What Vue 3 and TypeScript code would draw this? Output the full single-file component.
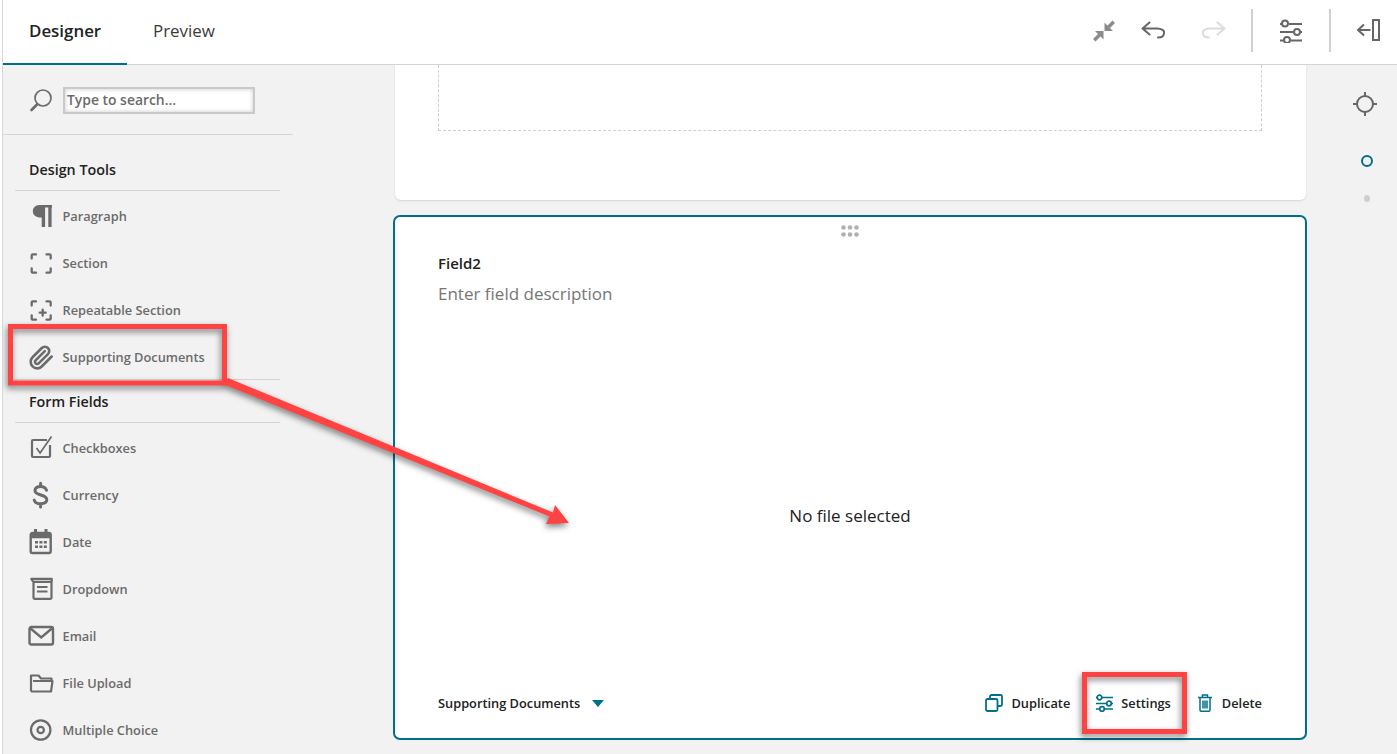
<script setup lang="ts">
interface Tool { label: string; svg: string }

const designTools: Tool[] = [
  { label: 'Paragraph', svg: '<path fill="#6b6b6b" d="M12 3h13v2.6h-.4V25h-3.3V5.6h-3.2V25h-3.4v-9.6H12A6.2 6.2 0 0 1 12 3z"/>' },
  { label: 'Section', svg: '<path fill="none" stroke="#6b6b6b" stroke-width="2.3" stroke-linecap="round" d="M4.7 9.5V6.6a1.2 1.2 0 0 1 1.2-1.2H9M19.5 5.4h3a1.2 1.2 0 0 1 1.2 1.2v2.9M4.7 19.5v3a1.2 1.2 0 0 0 1.2 1.2H9M19.5 23.7h3a1.2 1.2 0 0 0 1.2-1.2v-3"/>' },
  { label: 'Repeatable Section', svg: '<path fill="none" stroke="#6b6b6b" stroke-width="2.3" stroke-linecap="round" d="M4.7 9.5V6.6a1.2 1.2 0 0 1 1.2-1.2H9M19.5 5.4h3a1.2 1.2 0 0 1 1.2 1.2v2.9M4.7 19.5v3a1.2 1.2 0 0 0 1.2 1.2H9M19.5 23.7h3a1.2 1.2 0 0 0 1.2-1.2v-3M15.7 13.7v6M12.7 16.7h6"/>' },
  { label: 'Supporting Documents', svg: '<g transform="translate(1.5 1.6) scale(1.08)"><path fill="none" stroke="#6b6b6b" stroke-width="2.4" stroke-linecap="round" stroke-linejoin="round" d="m21.44 11.05-9.19 9.19a6 6 0 0 1-8.49-8.49l8.57-8.57A4 4 0 1 1 18 8.84l-8.59 8.57a2 2 0 0 1-2.83-2.83l8.49-8.48"/></g>' },
]

const formFields: Tool[] = [
  { label: 'Checkboxes', svg: '<path fill="none" stroke="#6b6b6b" stroke-width="2.2" stroke-linejoin="round" d="M20 6H6a1 1 0 0 0-1 1v15a1 1 0 0 0 1 1h16a1 1 0 0 0 1-1V11"/><path fill="none" stroke="#6b6b6b" stroke-width="1.7" d="M9.5 14l3.6 5L24.5 2.5"/>' },
  { label: 'Currency', svg: '<path fill="none" stroke="#6b6b6b" stroke-width="3" stroke-linecap="round" d="M19.5 9.300C18.500 6.800 16.800 5.600 13.600 5.600 10.200 5.600 8 7.200 8 9.800c0 5.400 11.800 3 11.800 8.800 0 2.700-2.400 4.200-6.200 4.200-3.400 0-5.600-1.200-6.400-3.700M13.600 2.200v3.400M13.600 23v3"/>' },
  { label: 'Date', svg: '<rect x="3.7" y="5" width="20" height="20" rx="1.8" fill="none" stroke="#6b6b6b" stroke-width="2.4"/><path fill="#6b6b6b" d="M3.7 5h20v5.3h-20zM7 1h3v5H7zM17.500 1h3v5h-3zM8 13h3v2.500H8zM12.400 13h3v2.500h-3zM16.800 13h3v2.500h-3zM8 17.500h3V20H8zM12.400 17.500h3V20h-3zM16.800 17.500h3V20h-3z"/>' },
  { label: 'Dropdown', svg: '<path fill="none" stroke="#6b6b6b" stroke-width="2.2" stroke-linejoin="round" d="M4.300 3.800h20.400v3H6.300zM6.500 6.800V22.800a1 1 0 0 0 1 1H23.500a1 1 0 0 0 1-1V6.800M10 12h10.500M10 16.500h10.500"/>' },
  { label: 'Email', svg: '<rect x="2.500" y="5" width="23.500" height="17.500" rx="1.800" fill="none" stroke="#6b6b6b" stroke-width="2.400"/><path fill="none" stroke="#6b6b6b" stroke-width="2.400" d="M3 6l11.200 9.500L25.500 6"/>' },
  { label: 'File Upload', svg: '<path fill="none" stroke="#6b6b6b" stroke-width="2.2" stroke-linejoin="round" d="M4 22.500V6.500h7.500l2.500 3h10.500v2.500M4 22.500h20l1.500-10.500H6M4 22.500V12"/>' },
  { label: 'Multiple Choice', svg: '<circle cx="13.700" cy="14" r="9.700" fill="none" stroke="#6b6b6b" stroke-width="2.200"/><circle cx="13.700" cy="14" r="3.200" fill="none" stroke="#6b6b6b" stroke-width="2.200"/>' },
]
</script>

<template>
  <div class="page">
    <header class="topbar">
      <nav class="tabs">
        <a class="tab active">Designer</a>
        <a class="tab">Preview</a>
      </nav>
      <div class="actions">
        <svg class="act" width="24" height="24" viewBox="0 0 24 24">
          <path fill="#8c8c8c" d="M20.500 1.500l2.500 2.500-5 5 3 3h-8.500V3.500l3 3zM3.500 22.500L1 20l5-5-3-3h8.500v8.500l-3-3z"/>
        </svg>
        <svg class="act" width="24" height="24" viewBox="0 0 24 24">
          <path fill="none" stroke="#666" stroke-width="2" stroke-linecap="round" stroke-linejoin="round" d="M8.500 3.500L1.500 9.500l7 6M1.500 9.500H16a7 3.800 0 0 1 7 4.500c0 3-2 4.500-6 4.500"/>
        </svg>
        <svg class="act redo" width="24" height="24" viewBox="0 0 24 24">
          <path fill="none" stroke="#dcdcdc" stroke-width="2" stroke-linecap="round" stroke-linejoin="round" d="M15.500 3.500l7 6-7 6M22.500 9.500H8a7 3.800 0 0 0-7 4.500c0 3 2 4.500 6 4.500"/>
        </svg>
        <span class="sep"></span>
        <svg class="act gear" width="24" height="24" viewBox="0 0 24 24">
          <g fill="none" stroke="#666" stroke-width="2">
            <path d="M10 5h13M1 5h1.500M1 13h13M21 13h2M1 21.500h3.500M11.500 21.500H23"/>
            <circle cx="6" cy="4.500" r="3"/>
            <circle cx="18" cy="13" r="3"/>
            <circle cx="8" cy="21" r="3"/>
          </g>
        </svg>
        <span class="sep last"></span>
        <svg class="act" width="24" height="24" viewBox="0 0 24 24">
          <g fill="none" stroke="#666" stroke-width="2">
            <rect x="17" y="1" width="6" height="20"/>
            <path d="M14.500 11H2M8 5.500L2 11l6 5.500"/>
          </g>
        </svg>
      </div>
    </header>

    <div class="body">
      <aside class="sidebar">
        <div class="search">
          <svg width="24" height="24" viewBox="0 0 24 24">
            <circle cx="14" cy="10" r="8" fill="none" stroke="#6b6b6b" stroke-width="1.700"/>
            <path stroke="#6b6b6b" stroke-width="2.600" stroke-linecap="round" d="M8 16.500l-5.500 5.500"/>
          </svg>
          <input class="search-input" type="text" placeholder="Type to search..." />
        </div>

        <section class="group">
          <h3 class="group-title">Design Tools</h3>
          <ul class="tools">
            <li v-for="t in designTools" :key="t.label" class="tool">
              <svg width="28" height="28" viewBox="0 0 28 28" v-html="t.svg"></svg>
              <span>{{ t.label }}</span>
            </li>
          </ul>
        </section>
        <section class="group fields">
          <h3 class="group-title">Form Fields</h3>
          <ul class="tools">
            <li v-for="t in formFields" :key="t.label" class="tool">
              <svg width="28" height="28" viewBox="0 0 28 28" v-html="t.svg"></svg>
              <span>{{ t.label }}</span>
            </li>
          </ul>
        </section>
      </aside>

      <main class="canvas">
        <div class="card-top">
          <div class="dropzone"></div>
        </div>
        <div class="card-active">
          <svg class="grip" width="18" height="12" viewBox="0 0 18 12">
            <g fill="#b0b0b0">
              <circle cx="2.500" cy="2.500" r="2.300"/><circle cx="9" cy="2.500" r="2.300"/><circle cx="15.500" cy="2.500" r="2.300"/>
              <circle cx="2.500" cy="9.500" r="2.300"/><circle cx="9" cy="9.500" r="2.300"/><circle cx="15.500" cy="9.500" r="2.300"/>
            </g>
          </svg>
          <div class="field-name">Field2</div>
          <div class="field-desc">Enter field description</div>
          <div class="field-body">No file selected</div>
          <footer class="field-foot">
            <div class="type">
              <span>Supporting Documents</span>
              <svg width="12" height="7" viewBox="0 0 12 7"><path fill="#006f8a" d="M0 0h12L6 7z"/></svg>
            </div>
            <div class="foot-actions">
              <span class="foot-btn">
                <svg width="18" height="18" viewBox="0 0 18 18">
                  <g fill="none" stroke="#006f8a" stroke-width="1.800" stroke-linejoin="round">
                    <rect x="1" y="5" width="11.500" height="12" rx="1.500"/>
                    <path d="M5 5V2.500A1.500 1.500 0 0 1 6.500 1h9A1.500 1.500 0 0 1 17 2.500v8a1.500 1.500 0 0 1-1.500 1.500h-3"/>
                  </g>
                </svg>
                Duplicate
              </span>
              <span class="foot-btn">
                <svg width="17" height="18" viewBox="0 0 17 18">
                  <g fill="none" stroke="#006f8a" stroke-width="1.700">
                    <path d="M6 3.500h11M0 3.500h1M0 9.500h10M15.500 9.500H17M0 15h3M8.500 15H17"/>
                    <circle cx="3.500" cy="3.500" r="2.300"/>
                    <circle cx="13" cy="9.500" r="2.300"/>
                    <circle cx="6" cy="15" r="2.300"/>
                  </g>
                </svg>
                Settings
              </span>
              <span class="foot-btn del">
                <svg width="14" height="18" viewBox="0 0 14 18">
                  <g fill="none" stroke="#006f8a" stroke-width="1.500">
                    <path d="M0 3.500h14M4.500 3.500V1h5v2.500M2 3.500V16a1.300 1.300 0 0 0 1.300 1.300h7.400A1.300 1.300 0 0 0 12 16V3.500M5 6.500v8M7 6.500v8M9 6.500v8"/>
                  </g>
                </svg>
                Delete
              </span>
            </div>
          </footer>
        </div>
      </main>

      <aside class="rail">
        <svg class="target" width="26" height="26" viewBox="0 0 26 26">
          <g fill="none" stroke="#666" stroke-width="2">
            <circle cx="13" cy="13" r="8"/>
            <path d="M13 1v5M13 20v5M1 13h5M20 13h5"/>
          </g>
        </svg>
        <span class="dot-ring"></span>
        <span class="dot-small"></span>
      </aside>
    </div>

    <svg class="marks" width="1397" height="754" viewBox="0 0 1397 754">
      <rect x="10.500" y="326.500" width="214" height="56.500" fill="none" stroke="#ff4343" stroke-width="5"/>
      <rect x="1084.500" y="674.500" width="100" height="57" fill="none" stroke="#ff4343" stroke-width="5"/>
      <path fill="#ff4343" d="M228 378 L553 512.500 L555 505 L569 523 L546 524 L549.500 516.500 L223 384z"/>
    </svg>
  </div>
</template>

<style scoped>
.page {
  position: relative;
  width: 1395px;
  height: 754px;
  margin-left: 2px;
  overflow: hidden;
  box-sizing: border-box;
  display: flex;
  flex-direction: column;
  background: #f2f2f2;
  border-left: 1px solid #d8d8d8;
  font-family: "Open Sans", "Noto Sans", sans-serif;
}
.topbar {
  flex: none;
  height: 65px;
  box-sizing: border-box;
  display: flex;
  justify-content: space-between;
  align-items: center;
  background: #fff;
  border-bottom: 1px solid #d4d4d4;
}
.tabs {
  display: flex;
  height: 65px;
}
.tab {
  box-sizing: border-box;
  height: 65px;
  width: 124px;
  padding-left: 26px;
  line-height: 62px;
  font-size: 16.900px;
  color: #3a3a3a;
}
.tab.active {
  font-weight: 600;
  color: #222;
  border-bottom: 2px solid #006f8a;
}
.actions {
  display: flex;
  align-items: center;
  gap: 25px;
  padding: 0 17px 2px 0;
}
.redo {
  margin-left: 12px;
}
.gear {
  margin-left: 1px;
}
.sep {
  width: 2px;
  height: 43px;
  margin-top: -2px;
  background: #d0d0d0;
}
.sep.last {
  margin-left: 1px;
}
.body {
  flex: 1;
  min-height: 0;
  display: flex;
}
.sidebar {
  flex: none;
  width: 290px;
}
.search {
  height: 70px;
  box-sizing: border-box;
  display: flex;
  align-items: center;
  gap: 10px;
  padding-left: 26px;
  padding-top: 1px;
  border-bottom: 1px solid #d4d4d4;
}
.search-input {
  width: 192px;
  height: 27px;
  box-sizing: border-box;
  border: 2px solid #c9c9c9;
  box-shadow: inset 0 0 4px rgba(0, 0, 0, 0.22);
  padding: 0 2px 2px;
  font: 600 13.900px "Open Sans", sans-serif;
  background: #fff;
  outline: none;
}
.search-input::placeholder {
  color: #6b6b6b;
  opacity: 1;
}
.group {
  width: 265px;
  margin-left: 12px;
}
.group-title {
  margin: 0;
  height: 56px;
  box-sizing: border-box;
  padding: 25px 0 0 14px;
  font-size: 14.300px;
  line-height: 20px;
  font-weight: 600;
  color: #222;
  border-bottom: 1px solid #d4d4d4;
}
.fields {
  margin-top: -1px;
  border-top: 1px solid #d4d4d4;
}
.fields .group-title {
  height: 43px;
  padding-top: 12px;
}
.tools {
  list-style: none;
  margin: 0;
  padding: 1px 0 0;
}
.tool {
  height: 47px;
  display: flex;
  align-items: center;
  gap: 7.500px;
  padding-left: 12px;
  font-size: 12.800px;
  font-weight: 600;
  color: #6b6b6b;
}
.tool svg {
  flex: none;
}
.canvas {
  flex: none;
  width: 1014px;
  box-sizing: border-box;
  padding-left: 100px;
}
.card-top {
  margin: 0 1px 0 2px;
  height: 135px;
  box-sizing: border-box;
  padding: 0 44px 0 43px;
  background: #fff;
  border-radius: 0 0 6px 6px;
  box-shadow: 0 1px 2px rgba(0, 0, 0, 0.12);
}
.dropzone {
  height: 65px;
  border: 1px dashed #cfcfcf;
  border-top: none;
}
.card-active {
  margin-top: 15px;
  height: 525px;
  box-sizing: border-box;
  display: flex;
  flex-direction: column;
  padding: 0 43px;
  background: #fff;
  border: 2px solid #006f8a;
  border-radius: 7px;
}
.grip {
  flex: none;
  align-self: center;
  margin-top: 8px;
}
.field-name {
  margin-top: 16px;
  font-size: 15px;
  line-height: 20px;
  font-weight: 600;
  color: #222;
}
.field-desc {
  margin-top: 9px;
  font-size: 17px;
  line-height: 24px;
  color: #767676;
}
.field-body {
  flex: 1;
  display: flex;
  align-items: center;
  justify-content: center;
  padding-top: 37px;
  font-size: 17px;
  color: #222;
}
.field-foot {
  flex: none;
  height: 32px;
  margin-bottom: 19px;
  display: flex;
  justify-content: space-between;
  align-items: center;
  font-size: 12.800px;
  font-weight: 600;
  color: #222;
}
.type {
  display: flex;
  align-items: center;
  gap: 12px;
}
.foot-actions {
  display: flex;
  align-items: center;
  gap: 26px;
}
.foot-btn {
  display: flex;
  align-items: center;
  gap: 8px;
}
.foot-btn.del {
  gap: 10px;
  margin-left: 1px;
}
.rail {
  flex: 1;
  display: flex;
  flex-direction: column;
  align-items: center;
  padding: 26px 0 0 26px;
  box-sizing: border-box;
}
.target {
  margin-left: -1px;
}
.dot-ring {
  margin-top: 38px;
  margin-left: 3px;
  width: 12px;
  height: 12px;
  box-sizing: border-box;
  border: 2px solid #006f8a;
  border-radius: 50%;
}
.dot-small {
  margin-top: 28px;
  margin-left: 3px;
  width: 6px;
  height: 7px;
  border-radius: 50%;
  background: #cfcfcf;
}
.marks {
  position: absolute;
  left: -3px;
  top: 0;
  pointer-events: none;
  filter: drop-shadow(-1px 3px 3px rgba(0, 0, 0, 0.5));
}
</style>

<style>
html, body {
  background: #fff;
  overflow: hidden;
}
</style>
